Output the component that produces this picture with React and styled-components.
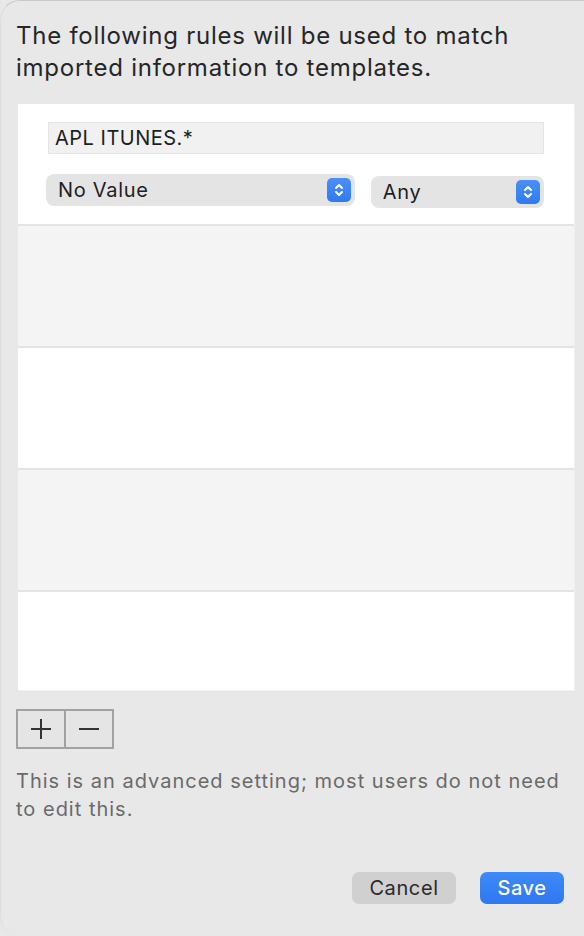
import React from 'react';
import styled, { createGlobalStyle } from 'styled-components';

const GlobalStyle = createGlobalStyle`
  html, body {
    margin: 0;
    padding: 0;
    background: #e8e8e8;
  }
  body {
    font-family: Inter, "Noto Sans", sans-serif;
  }
`;

const Sheet = styled.div`
  box-sizing: border-box;
  width: 584px;
  height: 936px;
  background: #e8e8e8;
  border-top: 1px solid #c9c9c9;
  border-left: 1px solid #dedede;
  border-radius: 20px 0 0 20px;
  padding: 19px 0 0 15px;
  display: flex;
  flex-direction: column;
  overflow: hidden;
`;

const Title = styled.p`
  margin: 0 0 20px;
  font-size: 24px;
  line-height: 32px;
  color: #262626;
  letter-spacing: 0.75px;
`;

const Table = styled.div`
  margin-left: 2px;
  width: 556px;
  height: 586px;
  overflow: hidden;
  background: #fff;
  box-shadow: 1px 1px 0 #efefef;
`;

const Row = styled.div`
  box-sizing: border-box;
  height: 122px;
  background: ${p => (p.alt ? '#f4f4f4' : '#fff')};
  border-bottom: 2px solid #e4e4e4;
  padding: 18px 30px 0 28px;
  display: flex;
  flex-direction: column;
  gap: 20px;
`;

const Field = styled.div`
  box-sizing: border-box;
  margin-left: 2px;
  height: 32px;
  background: #f1f1f1;
  border: 1px solid #e4e4e4;
  font-size: 20px;
  line-height: 30px;
  padding-left: 6px;
  color: #1e1e1e;
  letter-spacing: 0.5px;
`;

const Popups = styled.div`
  display: flex;
  align-items: flex-start;
  gap: 16px;
`;

const Popup = styled.div`
  box-sizing: border-box;
  width: ${p => p.w}px;
  height: 32px;
  margin-top: ${p => p.offset || 0}px;
  background: #e4e4e4;
  border-radius: 8px;
  display: flex;
  align-items: center;
  justify-content: space-between;
  padding: 0 4px 0 12px;
  font-size: 20px;
  color: #1e1e1e;
  letter-spacing: 0.7px;
`;

const Stepper = styled.span`
  width: 24px;
  height: 24px;
  border-radius: 5px;
  background: linear-gradient(#4a90f8, #2f7af2);
  display: flex;
  align-items: center;
  justify-content: center;
`;

const PlusMinus = styled.div`
  margin-top: 19px;
  display: flex;
  width: 98px;
  height: 40px;
  box-sizing: border-box;
  border: 2px solid #a2a2a2;
  background: #e5e5e5;
`;

const Segment = styled.div`
  flex: 1;
  display: flex;
  align-items: center;
  justify-content: center;
  & + & {
    border-left: 2px solid #a2a2a2;
  }
`;

const Note = styled.p`
  margin: 18px 0 0;
  width: 556px;
  font-size: 20px;
  line-height: 28px;
  color: #6a6a6a;
  letter-spacing: 1px;
`;

const Actions = styled.div`
  margin-top: auto;
  margin-bottom: 32px;
  display: flex;
  justify-content: flex-end;
  gap: 24px;
  padding-right: 20px;
`;

const Button = styled.button`
  border: none;
  height: 32px;
  width: ${p => p.w}px;
  border-radius: 7px;
  font-family: inherit;
  font-size: 20px;
  letter-spacing: 0.6px;
  padding: 0;
  background: ${p => (p.primary ? 'linear-gradient(#3d8af8, #2f78f1)' : '#d0d0d0')};
  color: ${p => (p.primary ? '#fff' : '#2a2a2a')};
  font-weight: ${p => (p.primary ? 500 : 400)};
`;

const Chevrons = () => (
  <svg width="12" height="16" viewBox="0 0 12 16" fill="none" stroke="#fff" strokeWidth="2" strokeLinecap="round" strokeLinejoin="round">
    <path d="M3 6 L6 3 L9 6" />
    <path d="M3 10 L6 13 L9 10" />
  </svg>
);

const Plus = () => (
  <svg width="22" height="22" viewBox="0 0 22 22" stroke="#333" strokeWidth="2">
    <path d="M11 1 V21 M1 11 H21" />
  </svg>
);

const Minus = () => (
  <svg width="22" height="22" viewBox="0 0 22 22" stroke="#333" strokeWidth="2">
    <path d="M1 11 H21" />
  </svg>
);

export default function App() {
  return (
    <>
      <GlobalStyle />
      <Sheet>
        <Title>
          The following rules will be used to match
          <br />
          imported information to templates.
        </Title>
        <Table>
          <Row>
            <Field>APL ITUNES.*</Field>
            <Popups>
              <Popup w={310}>
                No Value
                <Stepper>
                  <Chevrons />
                </Stepper>
              </Popup>
              <Popup w={174} offset={2}>
                Any
                <Stepper>
                  <Chevrons />
                </Stepper>
              </Popup>
            </Popups>
          </Row>
          <Row alt />
          <Row />
          <Row alt />
          <Row />
        </Table>
        <PlusMinus>
          <Segment>
            <Plus />
          </Segment>
          <Segment>
            <Minus />
          </Segment>
        </PlusMinus>
        <Note>This is an advanced setting; most users do not need to edit this.</Note>
        <Actions>
          <Button w={104}>Cancel</Button>
          <Button w={84} primary>
            Save
          </Button>
        </Actions>
      </Sheet>
    </>
  );
}
